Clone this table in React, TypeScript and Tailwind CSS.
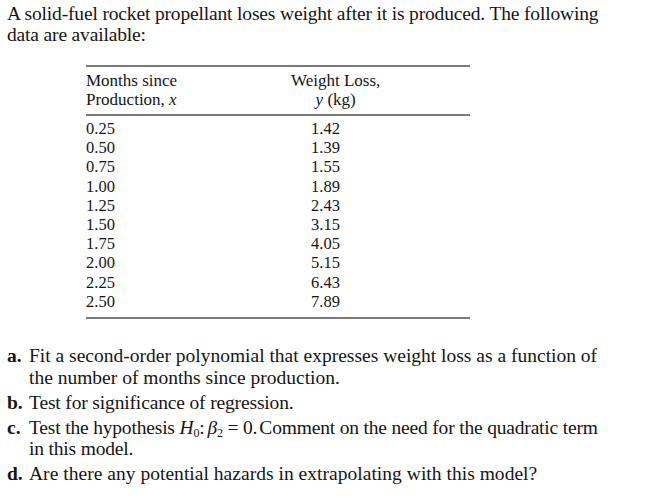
const rows: [string, string][] = [
  ['0.25', '1.42'],
  ['0.50', '1.39'],
  ['0.75', '1.55'],
  ['1.00', '1.89'],
  ['1.25', '2.43'],
  ['1.50', '3.15'],
  ['1.75', '4.05'],
  ['2.00', '5.15'],
  ['2.25', '6.43'],
  ['2.50', '7.89'],
]

function Item({ label, children, className = '' }: { label: string; children: React.ReactNode; className?: string }) {
  return (
    <div className="flex">
      <span className="w-[22px] shrink-0 font-bold">{label}</span>
      <span className={`whitespace-nowrap ${className}`}>{children}</span>
    </div>
  )
}

export default function App() {
  return (
    <div className="w-[654px] h-[498px] bg-white text-[#151515] font-['Liberation_Serif',serif] text-[19.5px] leading-[21px] pl-[7px] pt-[3px]">
      <p className="whitespace-nowrap tracking-[-0.16px]">
        A solid-fuel rocket propellant loses weight after it is produced. The following
        <br />
        data are available:
      </p>

      <div className="ml-[79px] mt-[20px] w-[384px] text-[16.5px] leading-[19px]">
        <div className="border-t-2 border-b-2 border-[#7a7a7a] pt-[4px] pb-[5px] flex">
          <div className="w-[205px] text-[17px]">
            <div>Months since</div>
            <div>Production, <i>x</i></div>
          </div>
          <div className="text-center text-[17px]">
            <div>Weight Loss,</div>
            <div><i>y</i> (kg)</div>
          </div>
        </div>
        <div className="border-b-2 border-[#7a7a7a] pt-[3px] pb-[6px]">
          {rows.map(([x, y]) => (
            <div key={x} className="flex leading-[19.2px]">
              <div className="w-[225px]">{x}</div>
              <div>{y}</div>
            </div>
          ))}
        </div>
      </div>

      <div className="mt-[26px] flex flex-col gap-[3.5px] leading-[21.5px]">
        <Item label="a.">
          Fit a second-order polynomial that expresses weight loss as a function of
          <br />
          the number of months since production.
        </Item>
        <Item label="b." className="tracking-[-0.15px]">Test for significance of regression.</Item>
        <Item label="c." className="tracking-[-0.18px]">
          Test the hypothesis <i>H</i><sub className="text-[12px]">0</sub>:<span className="ml-[3px]" /><i>β</i><sub className="text-[12px]">2</sub> = 0.<span className="ml-[2px]" />Comment on the need for the quadratic term
          <br />
          in this model.
        </Item>
        <Item label="d." className="tracking-[0.03px]">Are there any potential hazards in extrapolating with this model?</Item>
      </div>
    </div>
  )
}
